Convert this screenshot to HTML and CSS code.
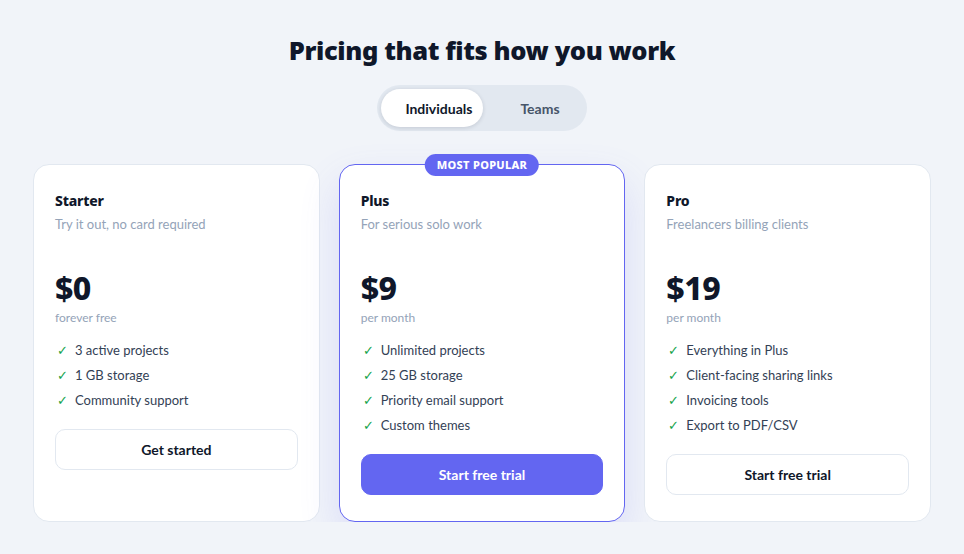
FILE: index.html
```html
<!DOCTYPE html>
<html lang="en">
<head>
<meta charset="utf-8">
<title>Pricing</title>
<link rel="stylesheet" href="styles.css">
</head>
<body>
<main class="page">
  <h1 class="title">Pricing that fits how you work</h1>
  <div class="toggle">
    <span class="toggle-thumb"></span>
    <button class="toggle-btn active">Individuals</button>
    <button class="toggle-btn">Teams</button>
  </div>
  <section class="cards">
    <article class="card">
      <h2 class="plan">Starter</h2>
      <p class="desc">Try it out, no card required</p>
      <div class="price">$0</div>
      <div class="period">forever free</div>
      <ul class="features">
        <li><span class="check">✓</span>3 active projects</li>
        <li><span class="check">✓</span>1 GB storage</li>
        <li><span class="check">✓</span>Community support</li>
      </ul>
      <button class="cta">Get started</button>
    </article>
    <article class="card popular">
      <span class="badge">MOST POPULAR</span>
      <h2 class="plan">Plus</h2>
      <p class="desc">For serious solo work</p>
      <div class="price">$9</div>
      <div class="period">per month</div>
      <ul class="features">
        <li><span class="check">✓</span>Unlimited projects</li>
        <li><span class="check">✓</span>25 GB storage</li>
        <li><span class="check">✓</span>Priority email support</li>
        <li><span class="check">✓</span>Custom themes</li>
      </ul>
      <button class="cta primary">Start free trial</button>
    </article>
    <article class="card">
      <h2 class="plan">Pro</h2>
      <p class="desc">Freelancers billing clients</p>
      <div class="price">$19</div>
      <div class="period">per month</div>
      <ul class="features">
        <li><span class="check">✓</span>Everything in Plus</li>
        <li><span class="check">✓</span>Client-facing sharing links</li>
        <li><span class="check">✓</span>Invoicing tools</li>
        <li><span class="check">✓</span>Export to PDF/CSV</li>
      </ul>
      <button class="cta">Start free trial</button>
    </article>
  </section>
</main>
</body>
</html>
```
FILE: styles.css
```css
* { box-sizing: border-box; }
html, body { margin: 0; padding: 0; }
body {
  background: #f1f4f9;
  font-family: Lato, "Noto Sans", sans-serif;
  color: #0f172a;
}
.page {
  width: 898px;
  margin: 0 auto;
  padding-top: 34px;
  display: flex;
  flex-direction: column;
  align-items: center;
}
.title {
  margin: 0;
  font-family: "Noto Sans", Lato, sans-serif;
  font-size: 25.5px;
  line-height: 32px;
  font-weight: 900;
  letter-spacing: -0.4px;
  color: #0f172a;
}
.toggle {
  position: relative;
  margin-top: 19px;
  display: flex;
  padding: 4px 3px 4px 4px;
  background: #e2e8f0;
  border-radius: 999px;
}
.toggle-thumb {
  position: absolute;
  left: 4px;
  top: 4px;
  width: 102px;
  height: 38px;
  background: #fff;
  border-radius: 999px;
  box-shadow: 0 1px 4px rgba(15, 23, 42, 0.14);
}
.toggle-btn {
  position: relative;
  font-family: inherit;
  border: 0;
  background: transparent;
  height: 38px;
  padding: 0 24px;
  border-radius: 999px;
  font-size: 14px;
  font-weight: 700;
  color: #475569;
  cursor: pointer;
}
.toggle-btn.active { color: #0f172a; }
.cards {
  margin-top: 33px;
  width: 100%;
  display: grid;
  grid-template-columns: repeat(3, 1fr);
  gap: 19px;
}
.card {
  position: relative;
  background: #fff;
  border: 1px solid #e2e8f0;
  border-radius: 16px;
  padding: 26px 21px 26px;
  display: flex;
  flex-direction: column;
}
.card.popular {
  border-color: #6366f1;
  box-shadow: 0 18px 40px rgba(99, 102, 241, 0.16);
}
.badge {
  position: absolute;
  top: -11px;
  left: 50%;
  transform: translateX(-50%);
  background: #6366f1;
  color: #fff;
  font-family: "Noto Sans", Lato, sans-serif;
  font-size: 11px;
  font-weight: 800;
  letter-spacing: 0.3px;
  line-height: 22px;
  padding: 0 12px;
  border-radius: 999px;
  white-space: nowrap;
}
.plan {
  margin: 0;
  font-family: "Noto Sans", Lato, sans-serif;
  font-size: 14px;
  line-height: 20px;
  font-weight: 800;
  letter-spacing: -0.2px;
}
.desc {
  margin: 3px 0 0;
  font-size: 13px;
  line-height: 20px;
  color: #94a3b8;
}
.price {
  margin-top: 34px;
  font-family: "Noto Sans", Lato, sans-serif;
  font-size: 32px;
  line-height: 40px;
  font-weight: 800;
  letter-spacing: -0.5px;
}
.period {
  margin-top: 2px;
  font-size: 12px;
  line-height: 16px;
  color: #94a3b8;
}
.features {
  list-style: none;
  margin: 12px 0 0;
  padding: 0;
}
.features li {
  display: flex;
  align-items: center;
  font-size: 13px;
  line-height: 25px;
  color: #334155;
}
.check {
  width: 20px;
  color: #16a34a;
  font-size: 13px;
  padding-left: 2px;
}
.cta {
  margin-top: 16px;
  width: 100%;
  height: 41px;
  font-family: inherit;
  font-size: 14px;
  font-weight: 700;
  color: #0f172a;
  background: #fff;
  border: 1px solid #e2e8f0;
  border-radius: 10px;
  cursor: pointer;
}
.cta.primary {
  background: #6366f1;
  border-color: #6366f1;
  color: #fff;
}
```
